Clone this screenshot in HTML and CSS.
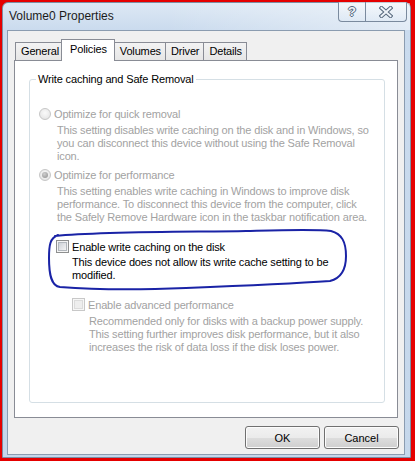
FILE: index.html
```html
<!DOCTYPE html>
<html>
<head>
<meta charset="utf-8">
<title>Volume0 Properties</title>
<link rel="stylesheet" href="styles.css">
</head>
<body>
<div class="window">
  <div class="titlebar">
    <span class="title">Volume0 Properties</span>
    <div class="caption-btns">
      <span class="cbtn help">?</span>
      <span class="cbtn close">
        <svg width="14" height="12" viewBox="0 0 14 12">
          <path d="M2.5 2 L11.5 10 M11.5 2 L2.5 10" stroke="#55677c" stroke-width="4" stroke-linecap="square" fill="none"/>
          <path d="M2.5 2 L11.5 10 M11.5 2 L2.5 10" stroke="#eef3f9" stroke-width="2" stroke-linecap="square" fill="none"/>
        </svg>
      </span>
    </div>
  </div>
  <div class="client">
    <div class="tabs">
      <div class="tab">General</div>
      <div class="tab active">Policies</div>
      <div class="tab">Volumes</div>
      <div class="tab">Driver</div>
      <div class="tab">Details</div>
    </div>
    <div class="panel">
      <fieldset class="group">
        <legend>Write caching and Safe Removal</legend>
        <div class="group-body">
          <div class="option disabled">
            <div class="row"><span class="radio"></span><span>Optimize for quick removal</span></div>
            <p class="desc">This setting disables write caching on the disk and in Windows, so<br>you can disconnect this device without using the Safe Removal<br>icon.</p>
          </div>
          <div class="option disabled mt4">
            <div class="row"><span class="radio checked"></span><span>Optimize for performance</span></div>
            <p class="desc">This setting enables write caching in Windows to improve disk<br>performance. To disconnect this device from the computer, click<br>the Safely Remove Hardware icon in the taskbar notification area.</p>
          </div>
          <div class="option sub1 mt15">
            <div class="row"><span class="check"></span><span>Enable write caching on the disk</span></div>
            <p class="desc tight">This device does not allow its write cache setting to be<br>modified.</p>
          </div>
          <div class="option sub2 disabled mt15">
            <div class="row"><span class="check"></span><span>Enable advanced performance</span></div>
            <p class="desc">Recommended only for disks with a backup power supply.<br>This setting further improves disk performance, but it also<br>increases the risk of data loss if the disk loses power.</p>
          </div>
        </div>
      </fieldset>
    </div>
    <div class="buttons">
      <button class="btn">OK</button>
      <button class="btn">Cancel</button>
    </div>
  </div>
</div>
<svg class="scribble" width="310" height="70" viewBox="0 0 310 70">
  <path d="M9 8 C60 3 150 4 200 3 C240 2 270 1 285 3 C296 6 300 14 300 28 C300 41 296 50 284 53 C240 56 190 58 140 60 C90 62 40 61 14 59 C5 58 3 46 3 30 C3 17 4 10 12 7" fill="none" stroke="#1a23a6" stroke-width="2" stroke-linecap="round"/>
</svg>
</body>
</html>
```
FILE: styles.css
```css
html, body {
  margin: 0;
  padding: 0;
}
body {
  width: 415px;
  height: 461px;
  background: #e50000;
  position: relative;
  overflow: hidden;
  font-family: "Liberation Sans", Arial, sans-serif;
  font-size: 11px;
  letter-spacing: -0.15px;
  color: #000;
}
.window {
  position: absolute;
  left: 2px;
  top: 2px;
  width: 409px;
  height: 456px;
  box-sizing: border-box;
  border: 1px solid #7d8ea3;
  border-radius: 6px 6px 0 0;
  background: linear-gradient(180deg, #dde8f4 0, #cadbee 27px, #c5d7eb 100%);
  display: flex;
  flex-direction: column;
}
.titlebar {
  height: 27px;
  flex: none;
  position: relative;
  padding-left: 6px;
  background: linear-gradient(90deg, rgba(255,255,255,0) 40%, rgba(255,255,255,0.45) 100%);
}
.title {
  font-size: 12px;
  letter-spacing: 0;
  line-height: 27px;
  color: #1b1b1b;
}
.caption-btns {
  position: absolute;
  top: -1px;
  right: 3px;
  display: flex;
  height: 20px;
}
.cbtn {
  height: 20px;
  box-sizing: border-box;
  border: 1px solid #7a8a9e;
  border-top: none;
  background: linear-gradient(180deg, rgba(255,255,255,0.55), rgba(255,255,255,0.15) 55%, rgba(220,232,245,0.4));
  display: flex;
  align-items: center;
  justify-content: center;
}
.help {
  width: 27px;
  border-radius: 0 0 0 4px;
  border-right: none;
  font-weight: bold;
  font-size: 13px;
  color: #eef3f9;
  text-shadow: 1px 0 0 #55677c, -1px 0 0 #55677c, 0 1px 0 #55677c, 0 -1px 0 #55677c;
}
.close {
  width: 42px;
  border-radius: 0 0 4px 0;
}
.client {
  flex: 1;
  margin: 0 5px 2px 4px;
  border: 1px solid #8b9cb0;
  background: #f0f0f0;
  display: flex;
  flex-direction: column;
}
.tabs {
  display: flex;
  align-items: flex-end;
  margin: 8px 0 0 7px;
  height: 21px;
  position: relative;
  z-index: 1;
}
.tab {
  height: 18px;
  box-sizing: border-box;
  border: 1px solid #898c95;
  border-bottom: none;
  margin-left: -1px;
  padding: 0 4px 0 5px;
  line-height: 17px;
  background: linear-gradient(180deg, #f3f3f3, #e6e6e6);
  color: #000;
}
.tab:first-child {
  margin-left: 0;
}
.tab.active {
  height: 22px;
  margin: 0 -2px -1px -3px;
  padding: 0 7px 0 8px;
  line-height: 18px;
  background: #fff;
  position: relative;
  z-index: 2;
}
.tab.active + .tab {
  margin-left: 1px;
}
.panel {
  margin: 0 6px 0 6px;
  height: 358px;
  box-sizing: border-box;
  border: 1px solid #898c95;
  background: #fff;
  padding: 12px 12px 14px 14px;
  display: flex;
  flex-direction: column;
}
.group {
  flex: 1;
  margin: 0;
  padding: 0;
  border: 1px solid #d5dfe5;
  border-radius: 3px;
  min-width: 0;
}
.group legend {
  margin-left: 6px;
  padding: 0 2px;
  line-height: 13px;
}
.group-body {
  padding: 20px 0 0 10px;
}
.row {
  display: flex;
  align-items: center;
  height: 15px;
  white-space: nowrap;
}
.desc {
  margin: 3px 0 0 17px;
  line-height: 13px;
  white-space: nowrap;
}
.desc.tight {
  margin-top: 2px;
}
.disabled {
  color: #a2a2a2;
}
.mt4 { margin-top: 4px; }
.mt15 { margin-top: 15px; }
.sub1 { margin-left: 16px; }
.sub1 .desc { margin-left: 16px; }
.sub2 { margin-left: 32px; }
.sub2 .desc { margin-left: 17px; }
.radio {
  width: 12px;
  height: 12px;
  box-sizing: border-box;
  border-radius: 50%;
  border: 1px solid #c6c6c6;
  background: radial-gradient(circle at 50% 40%, #fafafa 0, #e8e8e8 70%, #dcdcdc 100%);
  margin: 0 3px 0 -1px;
  flex: none;
  position: relative;
}
.radio.checked::after {
  content: "";
  position: absolute;
  left: 2px;
  top: 2px;
  width: 6px;
  height: 6px;
  border-radius: 50%;
  background: radial-gradient(circle at 40% 35%, #cfcfcf, #9a9a9a 80%);
}
.check {
  width: 13px;
  height: 13px;
  box-sizing: border-box;
  border: 1px solid #8e8f8f;
  background: #f4f4f4;
  margin-right: 3px;
  flex: none;
  position: relative;
}
.check::after {
  content: "";
  position: absolute;
  left: 1px;
  top: 1px;
  width: 9px;
  height: 9px;
  box-sizing: border-box;
  border: 1px solid #b2b7bd;
  background: linear-gradient(135deg, #cdd1d7, #f4f4f4);
}
.disabled .check {
  border-color: #c8c8c8;
  background: #f7f7f7;
}
.disabled .check::after {
  border-color: #dcdcdc;
  background: #eeeeee;
}
.buttons {
  display: flex;
  justify-content: flex-end;
  gap: 4px;
  margin: 8px 5px 0 0;
}
.btn {
  width: 75px;
  height: 23px;
  border: 1px solid #707070;
  border-radius: 3px;
  background: linear-gradient(180deg, #f2f2f2 0, #ebebeb 50%, #dddddd 51%, #cfcfcf 100%);
  box-shadow: inset 0 0 0 1px #fcfcfc;
  font-family: "Liberation Sans", Arial, sans-serif;
  font-size: 11px;
  color: #000;
  padding: 0;
}
.scribble {
  position: absolute;
  left: 46px;
  top: 228px;
}
```
